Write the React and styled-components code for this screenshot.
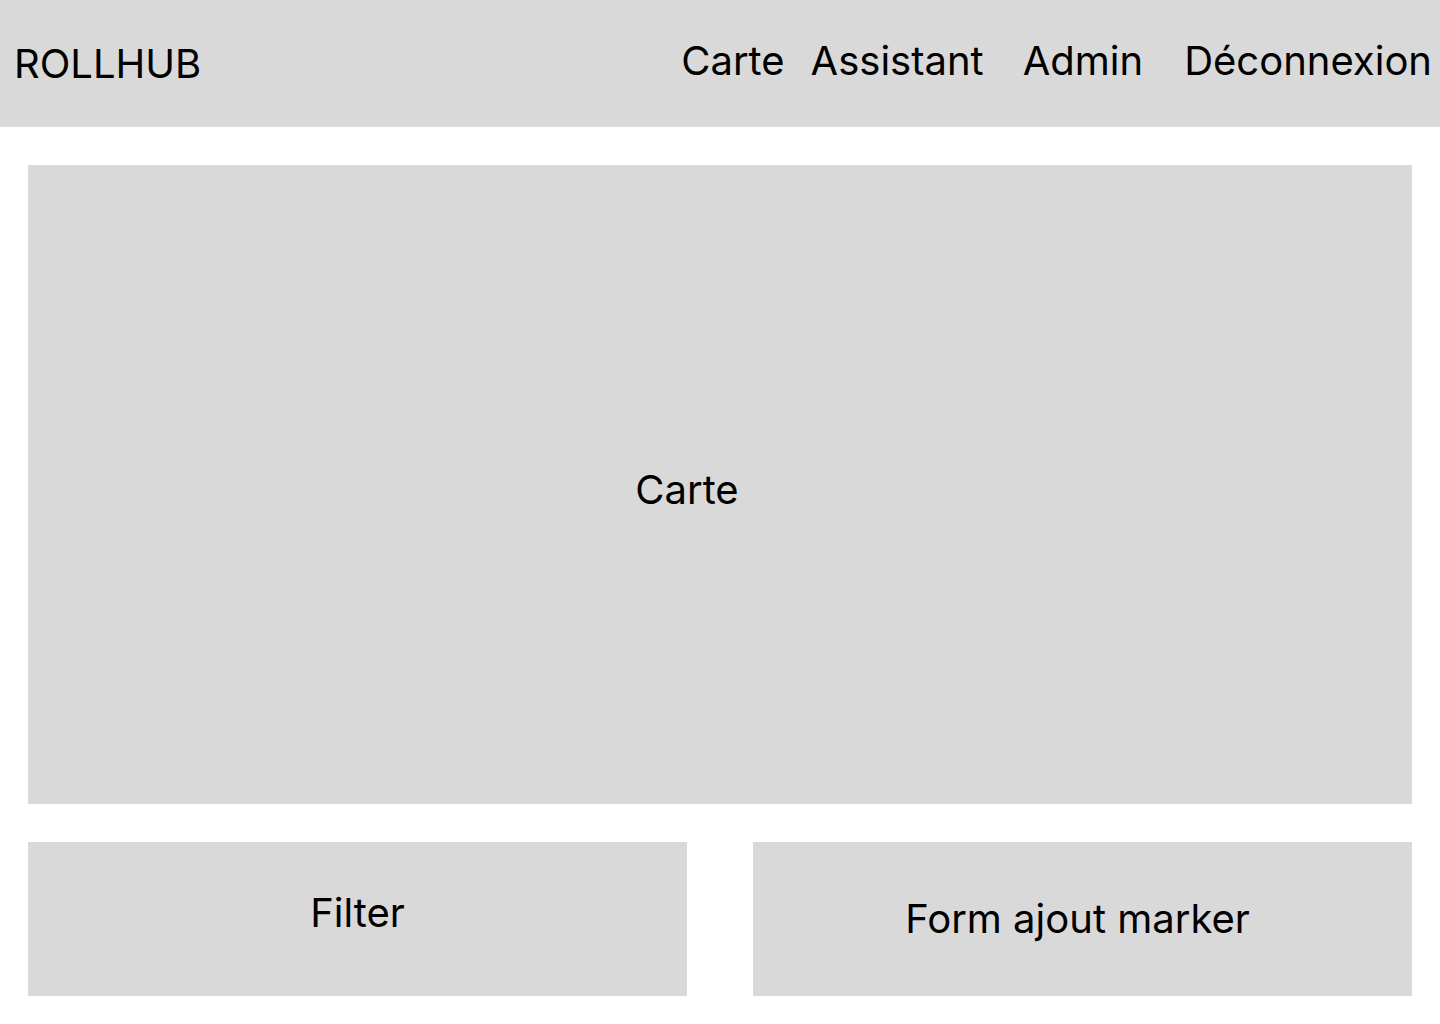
import React from "react";
import styled, { createGlobalStyle } from "styled-components";

const Global = createGlobalStyle`
  html, body { margin: 0; padding: 0; background: #ffffff; }
  body { font-family: Inter, "Noto Sans", sans-serif; color: #000; }
`;

const Page = styled.div`
  width: 1440px;
  min-height: 1024px;
  background: #ffffff;
`;

const Header = styled.header`
  height: 127px;
  background: #d9d9d9;
  display: flex;
  align-items: center;
  justify-content: space-between;
  padding: 0 8px 0 14px;
  box-sizing: border-box;
`;

const Logo = styled.div`
  font-size: 40px;
  line-height: 48px;
  padding-top: 1px;
`;

const Nav = styled.nav`
  display: flex;
  align-items: center;
  padding-bottom: 6px;
`;

const NavLink = styled.a`
  font-size: 40px;
  line-height: 48px;
  color: #000;
  text-decoration: none;
  margin-left: ${(p) => p.$gap || 0}px;
`;

const Main = styled.main`
  padding: 38px 28px 28px;
  display: flex;
  flex-direction: column;
  gap: 38px;
`;

const Panel = styled.section`
  background: #d9d9d9;
  height: ${(p) => p.$h}px;
  display: flex;
  align-items: center;
  justify-content: center;
  box-sizing: border-box;
  padding: ${(p) => p.$pad || "0"};
  font-size: 40px;
  line-height: 48px;
`;

const Row = styled.div`
  display: grid;
  grid-template-columns: 1fr 1fr;
  gap: 66px;
`;

export default function App() {
  return (
    <Page>
      <Global />
      <Header>
        <Logo>ROLLHUB</Logo>
        <Nav>
          <NavLink href="#">Carte</NavLink>
          <NavLink href="#" $gap={26}>Assistant</NavLink>
          <NavLink href="#" $gap={39}>Admin</NavLink>
          <NavLink href="#" $gap={41}>Déconnexion</NavLink>
        </Nav>
      </Header>
      <Main>
        <Panel $h={639} $pad="10px 66px 0 0">Carte</Panel>
        <Row>
          <Panel $h={154} $pad="0 0 12px 0">Filter</Panel>
          <Panel $h={154} $pad="0 10px 0 0">Form ajout marker</Panel>
        </Row>
      </Main>
    </Page>
  );
}
